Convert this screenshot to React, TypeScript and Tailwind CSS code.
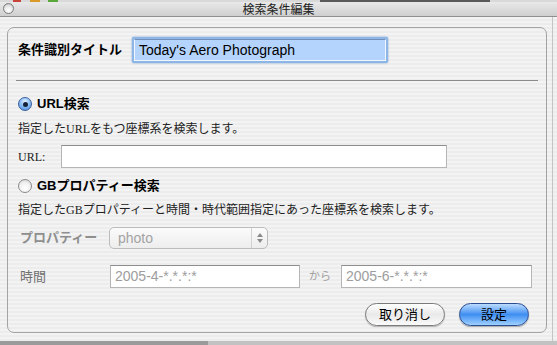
const sans = "font-['Liberation_Sans','Noto_Sans_CJK_JP',sans-serif]";
const serif = "font-['Liberation_Serif','Noto_Sans_CJK_JP',serif]";

const Radio = ({ checked }: { checked: boolean }) =>
    checked ? (
        <div className="w-[14px] h-[14px] rounded-full border border-[#3a5f9c] bg-[radial-gradient(circle_at_50%_30%,#e2f0ff_0%,#8fc0f5_45%,#3f86dc_100%)] flex items-center justify-center shrink-0">
            <div className="w-[5px] h-[5px] rounded-full bg-[#14213a]"></div>
        </div>
    ) : (
        <div className="w-[14px] h-[14px] rounded-full border border-[#8c8c8c] bg-[radial-gradient(circle_at_50%_70%,#ffffff_0%,#f2f2f2_50%,#cfcfcf_100%)] shrink-0"></div>
    );

const TextBox = ({ value, className }: { value: string; className: string }) => (
    <div
        className={
            "h-[23px] bg-white border border-[#b5b5b5] border-t-[#8e8e8e] flex items-center px-[4px] text-[14px] text-[#9d9d9d] " +
            className
        }
    >
        {value}
    </div>
);

const App = () => {
    return (
        <div
            className={
                "w-[557px] h-[345px] overflow-hidden flex flex-col bg-[repeating-linear-gradient(0deg,#ececec_0px,#ececec_2px,#f3f3f3_2px,#f3f3f3_4px)] text-black " +
                sans
            }
        >
            {/* bits of the window behind */}
            <div className="h-[2px] flex bg-[#d9d9d9] shrink-0">
                <div className="w-[13px]"></div>
                <div className="w-[8px] bg-[#c8443a]"></div>
                <div className="w-[9px]"></div>
                <div className="w-[10px] bg-[#d99a2a]"></div>
                <div className="w-[8px]"></div>
                <div className="w-[10px] bg-[#5aa83c]"></div>
                <div className="w-[262px]"></div>
                <div className="w-[170px] bg-[#5a5a5a]"></div>
            </div>

            {/* title bar */}
            <div className="h-[15px] shrink-0 relative flex items-center justify-center bg-gradient-to-b from-[#e9e9e9] to-[#cfcfcf] border-b border-[#8f8f8f]">
                <div className="absolute left-[3px] top-[1px] w-[11px] h-[11px] rounded-full border border-[#7c7c7c] bg-[radial-gradient(circle_at_50%_70%,#ffffff_0%,#e6e6e6_55%,#b0b0b0_100%)]"></div>
                <span className="text-[12px] leading-none text-[#222] font-['Noto_Sans_CJK_JP',sans-serif]">
                    検索条件編集
                </span>
            </div>

            <div className="flex flex-1">
                <div className="w-[553px] flex flex-col border-r border-[#c4c4c4]">
                    {/* group box */}
                    <div className="ml-[7px] mt-[10px] w-[540px] h-[306px] border border-[#a3a3a3] rounded-[7px] flex flex-col">
                        <div className="mt-[9px] h-[26px] flex items-center">
                            <span className="ml-[10px] w-[114px] text-[13px] font-bold">条件識別タイトル</span>
                            <div className="w-[256px] h-[26px] rounded-[2px] bg-[#8db6e6] p-[2px] shadow-[0_0_2px_#6b9bd6]">
                                <div className="w-full h-full bg-[#b4d4fd] border border-[#f2f7ff] border-t-[#6f8fb8] flex items-center px-[4px] text-[14px]">
                                    Today's Aero Photograph
                                </div>
                            </div>
                        </div>

                        <div className="mt-[17px] mx-[8px] h-px bg-[#8a8a8a]"></div>

                        <div className="mt-[15px] h-[16px] flex items-center gap-[5px] pl-[10px]">
                            <Radio checked />
                            <span className="text-[13px] font-bold">URL検索</span>
                        </div>

                        <div className={"mt-[9px] h-[16px] flex items-center pl-[10px] text-[12px] text-[#222] " + serif}>
                            指定したURLをもつ座標系を検索します。
                        </div>

                        <div className="mt-[8px] h-[23px] flex items-center">
                            <span className={"ml-[10px] w-[43px] text-[12px] text-[#222] " + serif}>URL:</span>
                            <TextBox value="" className="w-[386px]" />
                        </div>

                        <div className="mt-[10px] h-[16px] flex items-center gap-[5px] pl-[10px]">
                            <Radio checked={false} />
                            <span className="text-[13px] font-bold">GBプロパティー検索</span>
                        </div>

                        <div className={"mt-[8px] h-[16px] flex items-center pl-[10px] text-[12px] text-[#222] " + serif}>
                            指定したGBプロパティーと時間・時代範囲指定にあった座標系を検索します。
                        </div>

                        <div className="mt-[9px] h-[22px] flex items-center">
                            <span className="ml-[12px] w-[89px] text-[13px] font-bold text-[#8e8e8e]">プロパティー</span>
                            <div className="w-[159px] h-[22px] rounded-[5px] border border-[#bcbcbc] bg-gradient-to-b from-[#fbfbfb] to-[#ededed] flex items-center">
                                <span className="flex-1 pl-[8px] text-[14px] text-[#a3a3a3]">photo</span>
                                <div className="w-[16px] h-full border-l border-[#d2d2d2] flex flex-col items-center justify-center gap-[2px]">
                                    <svg width="6" height="4" viewBox="0 0 6 4">
                                        <path d="M0 4 L3 0 L6 4 Z" fill="#8a8a8a" />
                                    </svg>
                                    <svg width="6" height="4" viewBox="0 0 6 4">
                                        <path d="M0 0 L3 4 L6 0 Z" fill="#8a8a8a" />
                                    </svg>
                                </div>
                            </div>
                        </div>

                        <div className="mt-[16px] h-[23px] flex items-center">
                            <span className="ml-[12px] w-[90px] text-[13px] text-[#707070]">時間</span>
                            <TextBox value="2005-4-*.*.*:*" className="w-[190px]" />
                            <span className="ml-[9px] w-[32px] text-[11px] text-[#a0a0a0]">から</span>
                            <TextBox value="2005-6-*.*.*:*" className="w-[191px]" />
                        </div>

                        <div className="mt-[15px] h-[23px] flex items-center justify-end gap-[14px] pr-[17px]">
                            <button className="w-[80px] h-[23px] rounded-full border border-[#7a7a7a] bg-gradient-to-b from-[#ffffff] via-[#e9e9e9] to-[#fafafa] shadow-[0_1px_1px_rgba(0,0,0,0.25)] text-[13px] flex items-center justify-center">
                                取り消し
                            </button>
                            <button className="w-[70px] h-[23px] rounded-full border border-[#2b4e91] bg-gradient-to-b from-[#bcdcff] via-[#3d8ef0] to-[#9fd0ff] shadow-[0_1px_1px_rgba(0,0,0,0.3)] text-[13px] flex items-center justify-center">
                                設定
                            </button>
                        </div>
                    </div>
                </div>
            </div>

            <div className="h-[4px] flex shrink-0">
                <div className="w-[208px] bg-[#9a9a9a]"></div>
                <div className="flex-1 bg-[#c2c2c2]"></div>
            </div>
        </div>
    );
};

export default App;
